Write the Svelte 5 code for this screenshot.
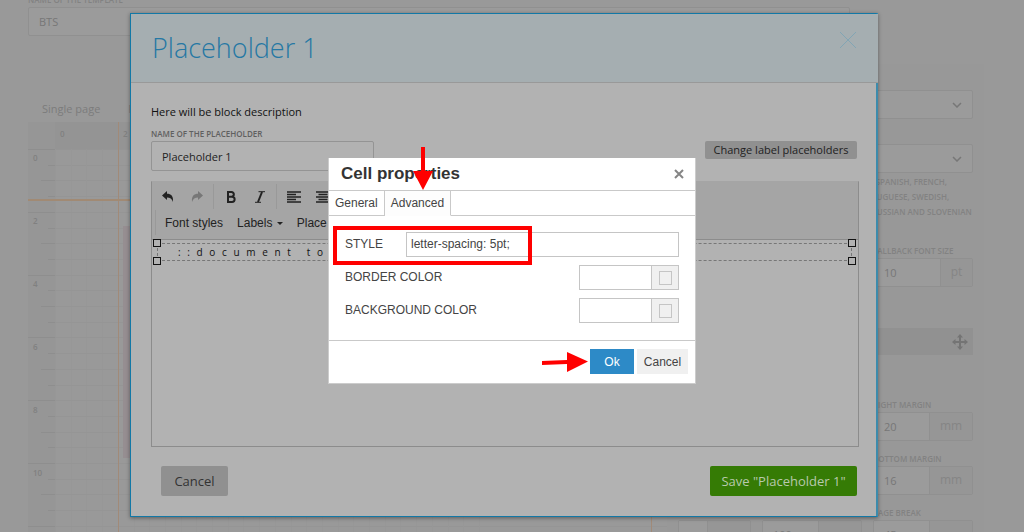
<script>
  let templateName = $state("BTS");
  let placeholderName = $state("Placeholder 1");
  let cellStyle = $state("letter-spacing: 5pt;");
  let borderColor = $state("");
  let backgroundColor = $state("");
  let tab = $state("Advanced");

  const tabs = ["General", "Advanced"];
  const columnMarks = [0, 2];
  const rowMarks = [0, 2, 4, 6, 8, 10];
  const minorTicks = Array.from({ length: 28 }, (_, i) => i);
  const margins = [
    { id: "right-margin", label: "RIGHT MARGIN", value: 20 },
    { id: "bottom-margin", label: "BOTTOM MARGIN", value: 16 }
  ];
</script>

<div class="app">
  <main class="page">
    <label class="caption" for="template-name">NAME OF THE TEMPLATE</label>
    <input id="template-name" class="field template-name" bind:value={templateName} />

    <div class="workspace">
      <section class="canvas">
        <nav class="page-tabs">
          <a href="#single">Single page</a>
          <a href="#first">F</a>
        </nav>
        <svg class="ruler" width="100%" height="440">
          <rect width="100%" height="27" fill="#949494" />
          <rect width="27" height="100%" fill="#969696" />
          <path d="M27.5 27V440M0 27.5H640" stroke="#909090" fill="none" />
          {#each minorTicks as i}
            {@const y = 27 + Math.round(i * 15.7)}
            <path d="M{i % 4 === 0 ? 0 : i % 2 === 0 ? 13 : 20} {y + 0.5}H27" stroke="#8e8e8e" />
            <path d="M27 {y + 0.5}H640" stroke="#959595" />
            <path d="M{y + 0.5} 27V440" stroke="#979797" />
          {/each}
          {#each columnMarks as mark, i}
            <text x={32 + i * 63} y="15">{mark}</text>
          {/each}
          {#each rowMarks as mark, i}
            <text x="5" y={39 + i * 63}>{mark}</text>
          {/each}
          <rect x="95" y="104" width="300" height="232" fill="#968e91" />
          <path d="M90.5 0V440M623.5 0V440" stroke="#a18a78" />
          <path d="M0 78H640" stroke="#a18a74" stroke-width="2" />
        </svg>
      </section>

      <aside class="sidebar">
        <select class="field" aria-label="Font family"><option></option></select>
        <select class="field second" aria-label="Fallback font"><option></option></select>
        <p class="hint">
          HUNGARIAN, SPANISH, FRENCH,<br />
          POLISH, PORTUGUESE, SWEDISH,<br />
          ROMANIAN, RUSSIAN AND SLOVENIAN
        </p>
        <div class="measure font-size">
          <label class="caption" for="font-size">FALLBACK FONT SIZE</label>
          <div class="group"><input id="font-size" value="10" /><span>pt</span></div>
        </div>
        <div class="block-bar">
          <svg width="16" height="16" viewBox="0 0 16 16">
            <path d="M8 0l3 3.500H9V7h3.500V5L16 8l-3.500 3V9H9v3.500h2L8 16l-3-3.500h2V9H3.500v2L0 8l3.500-3v2H7V3.500H5z" fill="#747474" />
          </svg>
        </div>
        <div class="margins">
          {#each margins as item}
            <div class="measure last">
              <label class="caption" for={item.id}>{item.label}</label>
              <div class="group wide"><input id={item.id} value={item.value} /><span>mm</span></div>
            </div>
          {/each}
          <div class="group wide bottom"><input aria-label="Left" /><span></span></div>
          <div class="group wide bottom"><input aria-label="Width" value="100" /><span></span></div>
          <div class="measure">
            <label class="caption" for="page-break">PAGE BREAK</label>
            <div class="group wide"><input id="page-break" value="45" /><span></span></div>
          </div>
        </div>
      </aside>
    </div>
  </main>

  <div class="layer">
    <section class="modal" role="dialog" aria-labelledby="modal-title">
      <header class="modal-head">
        <h1 id="modal-title">Placeholder 1</h1>
        <button class="modal-close" type="button" aria-label="Close">
          <svg width="18" height="18" viewBox="0 0 18 18">
            <path d="M1 1l16 16M17 1L1 17" stroke="#82a5b4" fill="none" />
          </svg>
        </button>
      </header>

      <div class="modal-body">
        <p class="description">Here will be block description</p>
        <label class="caption strong" for="placeholder-name">NAME OF THE PLACEHOLDER</label>
        <div class="name-row">
          <input id="placeholder-name" bind:value={placeholderName} />
          <button class="change-labels" type="button">Change label placeholders</button>
        </div>

        <div class="editor">
          <div class="toolbar">
            <div class="tools icons">
              <button type="button" aria-label="Undo">
                <svg width="12" height="12" viewBox="0 0 12 12"><path d="M0 4.500L5 0v2.800c4 0 6.500 2 6 8.200C10 7.500 8 6.400 5 6.400V9z" fill="#222" /></svg>
              </button>
              <button type="button" aria-label="Redo">
                <svg width="12" height="12" viewBox="0 0 12 12"><path d="M12 4.500L7 0v2.800c-4 0-6.500 2-6 8.200C2 7.500 4 6.400 7 6.400V9z" fill="#777" /></svg>
              </button>
              <i class="divider"></i>
              <button type="button" aria-label="Bold">
                <svg width="12" height="12" viewBox="0 0 12 12"><path d="M3 1h3.500a2.300 2.300 0 0 1 0 4.700H3zM3 5.700h4a2.600 2.600 0 0 1 0 5.300H3z" fill="none" stroke="#222" stroke-width="2" /></svg>
              </button>
              <button type="button" aria-label="Italic">
                <svg width="12" height="12" viewBox="0 0 12 12"><path d="M4.500 .7H11M1 11.300h6" stroke="#222" /><path d="M8 1L4 11" stroke="#222" stroke-width="2" /></svg>
              </button>
              <i class="divider"></i>
              <button type="button" aria-label="Align left">
                <svg width="14" height="12" viewBox="0 0 14 12"><path d="M0 1h14M0 3.500h9M0 6h14M0 8.500h9M0 11h14" stroke="#222" stroke-width="1.500" /></svg>
              </button>
              <button type="button" aria-label="Align center">
                <svg width="14" height="12" viewBox="0 0 14 12"><path d="M0 1h14M2.500 3.500h9M0 6h14M2.500 8.500h9M0 11h14" stroke="#222" stroke-width="1.500" /></svg>
              </button>
            </div>
            <div class="tools texts">
              <button type="button">Font styles</button>
              <button type="button">Labels <i class="caret"></i></button>
              <button type="button">Place</button>
            </div>
          </div>
          <div class="editor-content">
            <div class="cell">
              ::document to
              <i class="handle tl"></i><i class="handle tr"></i>
              <i class="handle bl"></i><i class="handle br"></i>
            </div>
          </div>
        </div>

        <footer class="modal-foot">
          <button class="btn" type="button">Cancel</button>
          <button class="btn save" type="button">Save "Placeholder 1"</button>
        </footer>
      </div>
    </section>
  </div>

  <div class="layer">
    <section class="props" role="dialog" aria-labelledby="props-title">
      <header class="props-head">
        <h2 id="props-title">Cell properties</h2>
        <button type="button" aria-label="Close">
          <svg width="10" height="10" viewBox="0 0 10 10"><path d="M1 1l8 8M9 1L1 9" stroke="#858585" stroke-width="2" fill="none" /></svg>
        </button>
      </header>
      <div class="props-tabs" role="tablist">
        {#each tabs as name}
          <button type="button" role="tab" aria-selected={tab === name} class:active={tab === name} onclick={() => (tab = name)}>{name}</button>
        {/each}
      </div>
      <div class="props-body">
        <div class="prop">
          <label for="cell-style">STYLE</label>
          <input id="cell-style" class="style-input" bind:value={cellStyle} />
        </div>
        <div class="prop">
          <label for="border-color">BORDER COLOR</label>
          <div class="color">
            <input id="border-color" bind:value={borderColor} />
            <button type="button" aria-label="Pick border color"><i></i></button>
          </div>
        </div>
        <div class="prop">
          <label for="background-color">BACKGROUND COLOR</label>
          <div class="color">
            <input id="background-color" bind:value={backgroundColor} />
            <button type="button" aria-label="Pick background color"><i></i></button>
          </div>
        </div>
      </div>
      <footer class="props-foot">
        <button class="ok" type="button">Ok</button>
        <button type="button">Cancel</button>
      </footer>

      <!-- tutorial marks -->
      <div class="frame"></div>
      <svg class="arrow down" width="20" height="43" viewBox="0 0 20 43">
        <path d="M8 0h4v24h8L10 43 0 24h8z" fill="#f00" />
      </svg>
      <svg class="arrow right" width="46" height="20" viewBox="0 0 46 20">
        <path d="M0 9l25-1V0l21 9.500L25 20v-8L0 13z" fill="#f00" />
      </svg>
    </section>
  </div>
</div>

<style>
  :global(body) {
    background: #999;
  }

  .app {
    position: relative;
    height: 100vh;
    overflow: hidden;
    font-family: "Open Sans", sans-serif;
    font-size: 11px;
    color: #222;
  }

  .app :global(*) {
    box-sizing: border-box;
  }

  button,
  input,
  select {
    font: inherit;
    color: inherit;
    margin: 0;
    outline: none;
  }

  button {
    padding: 0;
    border: none;
    background: none;
    cursor: pointer;
  }

  svg {
    display: block;
  }

  /* page under the dialogs */
  .page {
    margin-top: -8px;
    padding: 0 40px 0 28px;
    color: #777;
  }

  .caption {
    display: block;
    height: 15px;
    font-size: 8px;
    line-height: 15px;
    font-weight: 600;
    color: #828282;
    white-space: nowrap;
  }

  .field {
    display: block;
    width: 100%;
    height: 29px;
    padding: 0 10px;
    border: 1px solid #909090;
    border-radius: 2px;
    background: #9b9b9b;
  }

  .template-name {
    width: 86%;
  }

  .workspace {
    display: flex;
    margin-top: 28px;
  }

  .canvas {
    flex: 1;
    min-width: 0;
    padding-top: 32px;
  }

  .page-tabs {
    display: flex;
    gap: 28px;
    padding-left: 14px;
    height: 26px;
    line-height: 26px;
  }

  .page-tabs a {
    color: #7c7c7c;
    text-decoration: none;
  }

  .ruler text {
    font-size: 8px;
    font-weight: 600;
    fill: #808080;
  }

  .sidebar {
    width: 317px;
    padding: 26px 11px 0;
    background: #989898;
  }

  select.field {
    appearance: none;
    background: #9b9b9b url("data:image/svg+xml,%3Csvg xmlns='http://www.w3.org/2000/svg' width='10' height='6'%3E%3Cpath d='M1 1l4 4 4-4' fill='none' stroke='%23777' stroke-width='1.500'/%3E%3C/svg%3E") no-repeat right 10px center;
  }

  .second {
    margin-top: 25px;
  }

  .hint {
    margin: 1px 0 0 145px;
    font-size: 8px;
    line-height: 15px;
    font-weight: 600;
    color: #828282;
    white-space: nowrap;
  }

  .font-size {
    width: 100px;
    margin: 24px 0 0 auto;
  }

  .group {
    display: flex;
    height: 29px;
    border: 1px solid #909090;
    border-radius: 2px;
  }

  .group input {
    flex: 1;
    width: 0;
    padding: 0 10px;
    border: none;
    background: #9b9b9b;
  }

  .group span {
    width: 32px;
    border-left: 1px solid #909090;
    background: #969696;
    font-size: 12px;
    line-height: 26px;
    text-align: center;
    color: #858585;
  }

  .group.wide span {
    width: 43px;
  }

  .block-bar {
    display: flex;
    justify-content: flex-end;
    align-items: center;
    height: 27px;
    margin-top: 41px;
    padding-right: 5px;
    background: #919191;
  }

  .margins {
    display: grid;
    grid-template-columns: 1fr 100px 100px;
    align-items: end;
    gap: 10px 11px;
    margin-top: 42px;
  }

  .measure.last {
    grid-column: 3;
  }

  /* placeholder dialog */
  .layer {
    position: absolute;
    inset: 0;
    display: flex;
    align-items: flex-start;
  }

  .modal {
    flex: 1;
    margin: 13px 146px 0 130px;
    border: 1px solid #1278a6;
    border-right: 2px solid #3c8bac;
    background: #b2b2b2;
    box-shadow: 0 1px 4px rgba(0, 0, 0, 0.4);
  }

  .modal-head {
    display: flex;
    justify-content: space-between;
    align-items: center;
    height: 69px;
    margin-right: -2px;
    padding: 0 21px;
    border-bottom: 1px solid #999;
    background: #a5aeb1;
  }

  h1 {
    margin: 0;
    font-size: 27px;
    line-height: 36px;
    font-weight: 300;
    color: #2578a4;
  }

  .modal-close {
    margin-bottom: 16px;
  }

  .modal-body {
    padding: 21px 17px 20px 20px;
  }

  .description {
    margin: 0;
    line-height: 15px;
    color: #111;
  }

  .caption.strong {
    margin-top: 7px;
    color: #606060;
  }

  .name-row {
    display: flex;
    justify-content: space-between;
    align-items: flex-start;
    padding-right: 2px;
  }

  .name-row input {
    width: 223px;
    height: 30px;
    padding: 0 10px;
    border: 1px solid #949494;
    border-radius: 2px;
    background: #b2b2b2;
    color: #222;
  }

  .change-labels {
    width: 152px;
    height: 18px;
    border-radius: 2px;
    background: #909090;
    line-height: 18px;
    white-space: nowrap;
  }

  .editor {
    margin-top: 10px;
    border: 1px solid #8c8c8c;
    border-top-color: #a5a5a5;
    font-family: "Liberation Sans", Arial, sans-serif;
    font-size: 12px;
  }

  .toolbar {
    height: 58px;
    padding: 2px 3px;
    border-bottom: 1px solid #8c8c8c;
    background: #a5a5a5;
  }

  .tools {
    display: flex;
    align-items: center;
    height: 25px;
  }

  .icons {
    margin-left: -2px;
  }

  .icons button {
    display: grid;
    place-items: center;
    width: 29px;
    height: 25px;
  }

  .divider {
    height: 25px;
    margin: 0 2px;
    border-left: 1px solid #999;
  }

  .texts {
    gap: 14px;
    margin-top: 1px;
    padding-left: 9px;
    border-left: 1px solid #999;
  }

  .caret {
    display: inline-block;
    margin-left: 1px;
    border: 3px solid transparent;
    border-top-color: #222;
    border-bottom: none;
    vertical-align: middle;
  }

  .editor-content {
    height: 206px;
    padding: 3px 6px 0 5px;
  }

  .cell {
    position: relative;
    height: 18px;
    padding-left: 20px;
    border: 1px dashed #777;
    font-family: "Open Sans", sans-serif;
    font-size: 10px;
    line-height: 16px;
    letter-spacing: 5pt;
    color: #111;
  }

  .handle {
    position: absolute;
    width: 8px;
    height: 8px;
    border: 1px solid #111;
    background: #b2b2b2;
  }

  .tl,
  .bl {
    left: -5px;
  }

  .tr,
  .br {
    right: -5px;
  }

  .tl,
  .tr {
    top: -5px;
  }

  .bl,
  .br {
    bottom: -5px;
  }

  .modal-foot {
    display: flex;
    justify-content: space-between;
    margin-top: 19px;
    padding: 0 2px 0 10px;
  }

  .btn {
    width: 67px;
    height: 30px;
    border-radius: 2px;
    background: #909090;
    font-size: 13px;
    color: #333;
  }

  .btn.save {
    width: 147px;
    background: #357b05;
    color: #b8c9ad;
  }

  /* cell properties dialog */
  .props {
    position: relative;
    width: 368px;
    margin: 158px auto 0;
    border: 1px solid #ccc;
    border-top: none;
    background: #fff;
    font-family: "Liberation Sans", Arial, sans-serif;
    font-size: 12px;
    color: #444;
  }

  .props-head {
    display: flex;
    justify-content: space-between;
    align-items: center;
    height: 33px;
    padding: 0 11px 0 12px;
    border-bottom: 1px solid #c9c9c9;
  }

  h2 {
    margin: 0;
    font-size: 17px;
    line-height: 20px;
    font-weight: 700;
    color: #333;
  }

  .props-tabs {
    display: flex;
    height: 25px;
    border-bottom: 1px solid #c9c9c9;
  }

  .props-tabs button {
    height: 25px;
    padding: 0 6px;
    border-right: 1px solid #c9c9c9;
    border-bottom: 1px solid #c9c9c9;
  }

  .props-tabs .active {
    border-bottom-color: #fdfdfd;
    background: #fdfdfd;
  }

  .props-body {
    display: grid;
    gap: 8px;
    height: 124px;
    align-content: start;
    padding: 16px 16px 0;
  }

  .prop {
    display: flex;
    justify-content: space-between;
    height: 25px;
    line-height: 25px;
  }

  .prop input {
    height: 25px;
    padding: 0 4px;
    border: 1px solid #c5c5c5;
    background: #fff;
  }

  .prop .style-input {
    width: 273px;
  }

  .color {
    display: flex;
    width: 100px;
  }

  .color input {
    flex: 1;
    width: 0;
  }

  .color button {
    display: grid;
    place-items: center;
    width: 27px;
    border: 1px solid #c5c5c5;
    border-left: none;
    background: #f0f0f0;
  }

  .color i {
    width: 13px;
    height: 14px;
    border: 1px solid #c5c5c5;
  }

  .props-foot {
    display: flex;
    justify-content: flex-end;
    gap: 3px;
    height: 43px;
    padding: 8px 7px;
    border-top: 1px solid #c9c9c9;
  }

  .props-foot button {
    width: 51px;
    height: 25px;
    background: #f0f0f0;
  }

  .props-foot .ok {
    width: 44px;
    background: #2d8ac7;
    color: #fff;
  }

  .frame {
    position: absolute;
    left: 4px;
    top: 68px;
    width: 199px;
    height: 39px;
    border: 4px solid #f00;
  }

  .arrow {
    position: absolute;
  }

  .arrow.down {
    left: 84px;
    top: -11px;
  }

  .arrow.right {
    left: 213px;
    top: 194px;
  }
</style>
